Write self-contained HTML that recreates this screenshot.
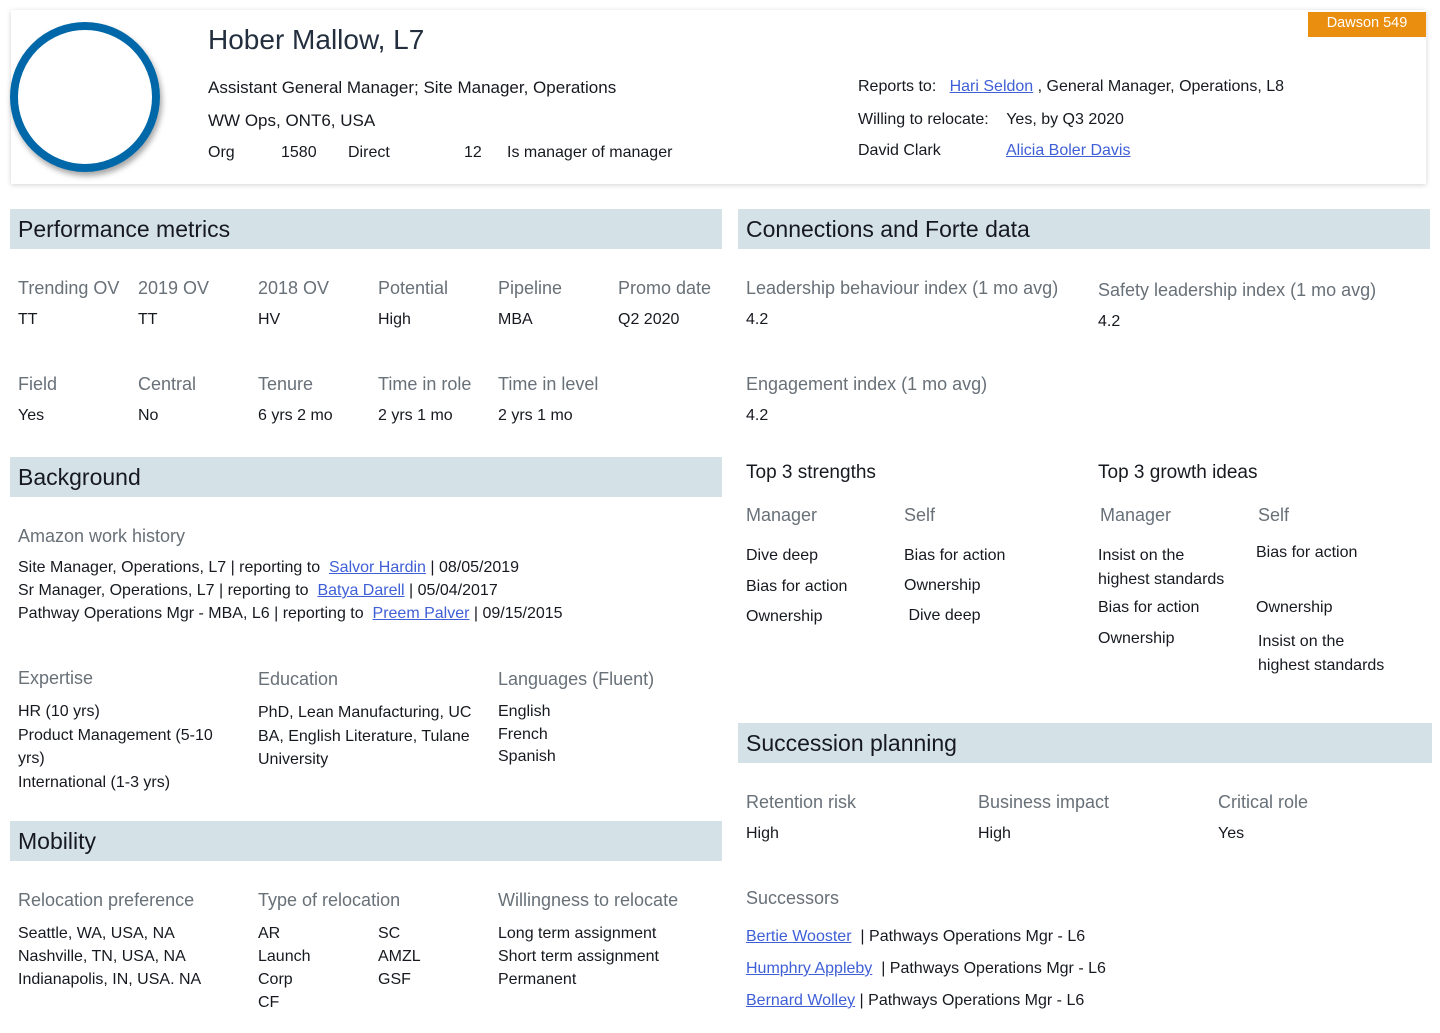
<!DOCTYPE html>
<html><head><meta charset="utf-8"><style>
body{margin:0;width:1440px;height:1033px;background:#fff;font-family:"Liberation Sans",sans-serif;color:#16191f;position:relative;overflow:hidden}
.a{position:absolute;white-space:nowrap}
.t{font-size:16px}
.l{font-size:18px;color:#687078}
.h{position:absolute;background:#d4e2e7;height:40px;font-size:23px;line-height:40px;padding-left:8px;box-sizing:border-box;color:#16191f}
a{color:#3f5fd6;text-decoration:underline}
.card{position:absolute;left:11px;top:10px;width:1415px;height:174px;background:#fff;box-shadow:0 1px 5px rgba(0,0,0,.18)}
</style></head><body>
<div class="card"></div>
<div class="a" style="left:10px;top:22px;width:134px;height:134px;border:8px solid #0068a8;border-radius:50%;box-shadow:2px 4px 6px rgba(0,0,0,.35)"></div>
<div class="a" style="left:1308px;top:12px;width:118px;height:25px;background:#ea8e10;color:#fff;font-size:14.5px;line-height:23px;text-align:center">Dawson 549</div>
<div class="a" style="left:208px;top:24px;font-size:28px;color:#232f3e">Hober Mallow, L7</div>
<div class="a t" style="left:208px;top:78px;font-size:17px">Assistant General Manager; Site Manager, Operations</div>
<div class="a t" style="left:208px;top:111px;font-size:17px">WW Ops, ONT6, USA</div>
<div class="a t" style="left:208px;top:144px">Org</div>
<div class="a t" style="left:281px;top:144px">1580</div>
<div class="a t" style="left:348px;top:144px">Direct</div>
<div class="a t" style="left:464px;top:144px">12</div>
<div class="a t" style="left:507px;top:144px">Is manager of manager</div>
<div class="a t" style="left:858px;top:78px">Reports to: &nbsp;&nbsp;<a>Hari Seldon</a> , General Manager, Operations, L8</div>
<div class="a t" style="left:858px;top:111px">Willing to relocate:&nbsp;&nbsp;&nbsp; Yes, by Q3 2020</div>
<div class="a t" style="left:858px;top:142px">David Clark</div>
<div class="a t" style="left:1006px;top:142px"><a>Alicia Boler Davis</a></div>

<div class="h" style="left:10px;top:209px;width:712px">Performance metrics</div>
<div class="h" style="left:738px;top:209px;width:692px">Connections and Forte data</div>

<div class="a l" style="left:18px;top:278px">Trending OV</div><div class="a t" style="left:18px;top:311px">TT</div>
<div class="a l" style="left:138px;top:278px">2019 OV</div><div class="a t" style="left:138px;top:311px">TT</div>
<div class="a l" style="left:258px;top:278px">2018 OV</div><div class="a t" style="left:258px;top:311px">HV</div>
<div class="a l" style="left:378px;top:278px">Potential</div><div class="a t" style="left:378px;top:311px">High</div>
<div class="a l" style="left:498px;top:278px">Pipeline</div><div class="a t" style="left:498px;top:311px">MBA</div>
<div class="a l" style="left:618px;top:278px">Promo date</div><div class="a t" style="left:618px;top:311px">Q2 2020</div>
<div class="a l" style="left:18px;top:374px">Field</div><div class="a t" style="left:18px;top:407px">Yes</div>
<div class="a l" style="left:138px;top:374px">Central</div><div class="a t" style="left:138px;top:407px">No</div>
<div class="a l" style="left:258px;top:374px">Tenure</div><div class="a t" style="left:258px;top:407px">6 yrs 2 mo</div>
<div class="a l" style="left:378px;top:374px">Time in role</div><div class="a t" style="left:378px;top:407px">2 yrs 1 mo</div>
<div class="a l" style="left:498px;top:374px">Time in level</div><div class="a t" style="left:498px;top:407px">2 yrs 1 mo</div>

<div class="a l" style="left:746px;top:278px">Leadership behaviour index (1 mo avg)</div><div class="a t" style="left:746px;top:311px">4.2</div>
<div class="a l" style="left:1098px;top:280px">Safety leadership index (1 mo avg)</div><div class="a t" style="left:1098px;top:313px">4.2</div>
<div class="a l" style="left:746px;top:374px">Engagement index (1 mo avg)</div><div class="a t" style="left:746px;top:407px">4.2</div>

<div class="h" style="left:10px;top:457px;width:712px">Background</div>
<div class="a l" style="left:18px;top:526px">Amazon work history</div>
<div class="a t" style="left:18px;top:559px">Site Manager, Operations, L7 | reporting to &nbsp;<a>Salvor Hardin</a> | 08/05/2019</div>
<div class="a t" style="left:18px;top:582px">Sr Manager, Operations, L7 | reporting to &nbsp;<a>Batya Darell</a> | 05/04/2017</div>
<div class="a t" style="left:18px;top:605px">Pathway Operations Mgr - MBA, L6 | reporting to &nbsp;<a>Preem Palver</a> | 09/15/2015</div>

<div class="a l" style="left:18px;top:668px">Expertise</div>
<div class="a t" style="left:18px;top:700px;line-height:23.5px">HR (10 yrs)<br>Product Management (5-10<br>yrs)<br>International (1-3 yrs)</div>
<div class="a l" style="left:258px;top:669px">Education</div>
<div class="a t" style="left:258px;top:701px;line-height:23.5px">PhD, Lean Manufacturing, UC<br>BA, English Literature, Tulane<br>University</div>
<div class="a l" style="left:498px;top:669px">Languages (Fluent)</div>
<div class="a t" style="left:498px;top:701px;line-height:22.5px">English<br>French<br>Spanish</div>

<div class="a" style="left:746px;top:462px;font-size:19px">Top 3 strengths</div>
<div class="a" style="left:1098px;top:462px;font-size:19px">Top 3 growth ideas</div>
<div class="a l" style="left:746px;top:505px">Manager</div>
<div class="a l" style="left:904px;top:505px">Self</div>
<div class="a l" style="left:1100px;top:505px">Manager</div>
<div class="a l" style="left:1258px;top:505px">Self</div>
<div class="a t" style="left:746px;top:541px;line-height:30.5px">Dive deep<br>Bias for action<br>Ownership</div>
<div class="a t" style="left:904px;top:541px;line-height:30px">Bias for action<br>Ownership<br>&nbsp;Dive deep</div>
<div class="a t" style="left:1098px;top:544px;line-height:24px">Insist on the<br>highest standards</div>
<div class="a t" style="left:1098px;top:599px">Bias for action</div>
<div class="a t" style="left:1098px;top:630px">Ownership</div>
<div class="a t" style="left:1256px;top:544px">Bias for action</div>
<div class="a t" style="left:1256px;top:599px">Ownership</div>
<div class="a t" style="left:1258px;top:630px;line-height:24px">Insist on the<br>highest standards</div>

<div class="h" style="left:738px;top:723px;width:694px">Succession planning</div>
<div class="a l" style="left:746px;top:792px">Retention risk</div><div class="a t" style="left:746px;top:825px">High</div>
<div class="a l" style="left:978px;top:792px">Business impact</div><div class="a t" style="left:978px;top:825px">High</div>
<div class="a l" style="left:1218px;top:792px">Critical role</div><div class="a t" style="left:1218px;top:825px">Yes</div>
<div class="a l" style="left:746px;top:888px">Successors</div>
<div class="a t" style="left:746px;top:928px"><a>Bertie Wooster</a> &nbsp;| Pathways Operations Mgr - L6</div>
<div class="a t" style="left:746px;top:960px"><a>Humphry Appleby</a> &nbsp;| Pathways Operations Mgr - L6</div>
<div class="a t" style="left:746px;top:992px"><a>Bernard Wolley</a> | Pathways Operations Mgr - L6</div>

<div class="h" style="left:10px;top:821px;width:712px">Mobility</div>
<div class="a l" style="left:18px;top:890px">Relocation preference</div>
<div class="a t" style="left:18px;top:922px;line-height:23px">Seattle, WA, USA, NA<br>Nashville, TN, USA, NA<br>Indianapolis, IN, USA. NA</div>
<div class="a l" style="left:258px;top:890px">Type of relocation</div>
<div class="a t" style="left:258px;top:922px;line-height:23px">AR<br>Launch<br>Corp<br>CF</div>
<div class="a t" style="left:378px;top:922px;line-height:23px">SC<br>AMZL<br>GSF</div>
<div class="a l" style="left:498px;top:890px">Willingness to relocate</div>
<div class="a t" style="left:498px;top:922px;line-height:23px">Long term assignment<br>Short term assignment<br>Permanent</div>
</body></html>
